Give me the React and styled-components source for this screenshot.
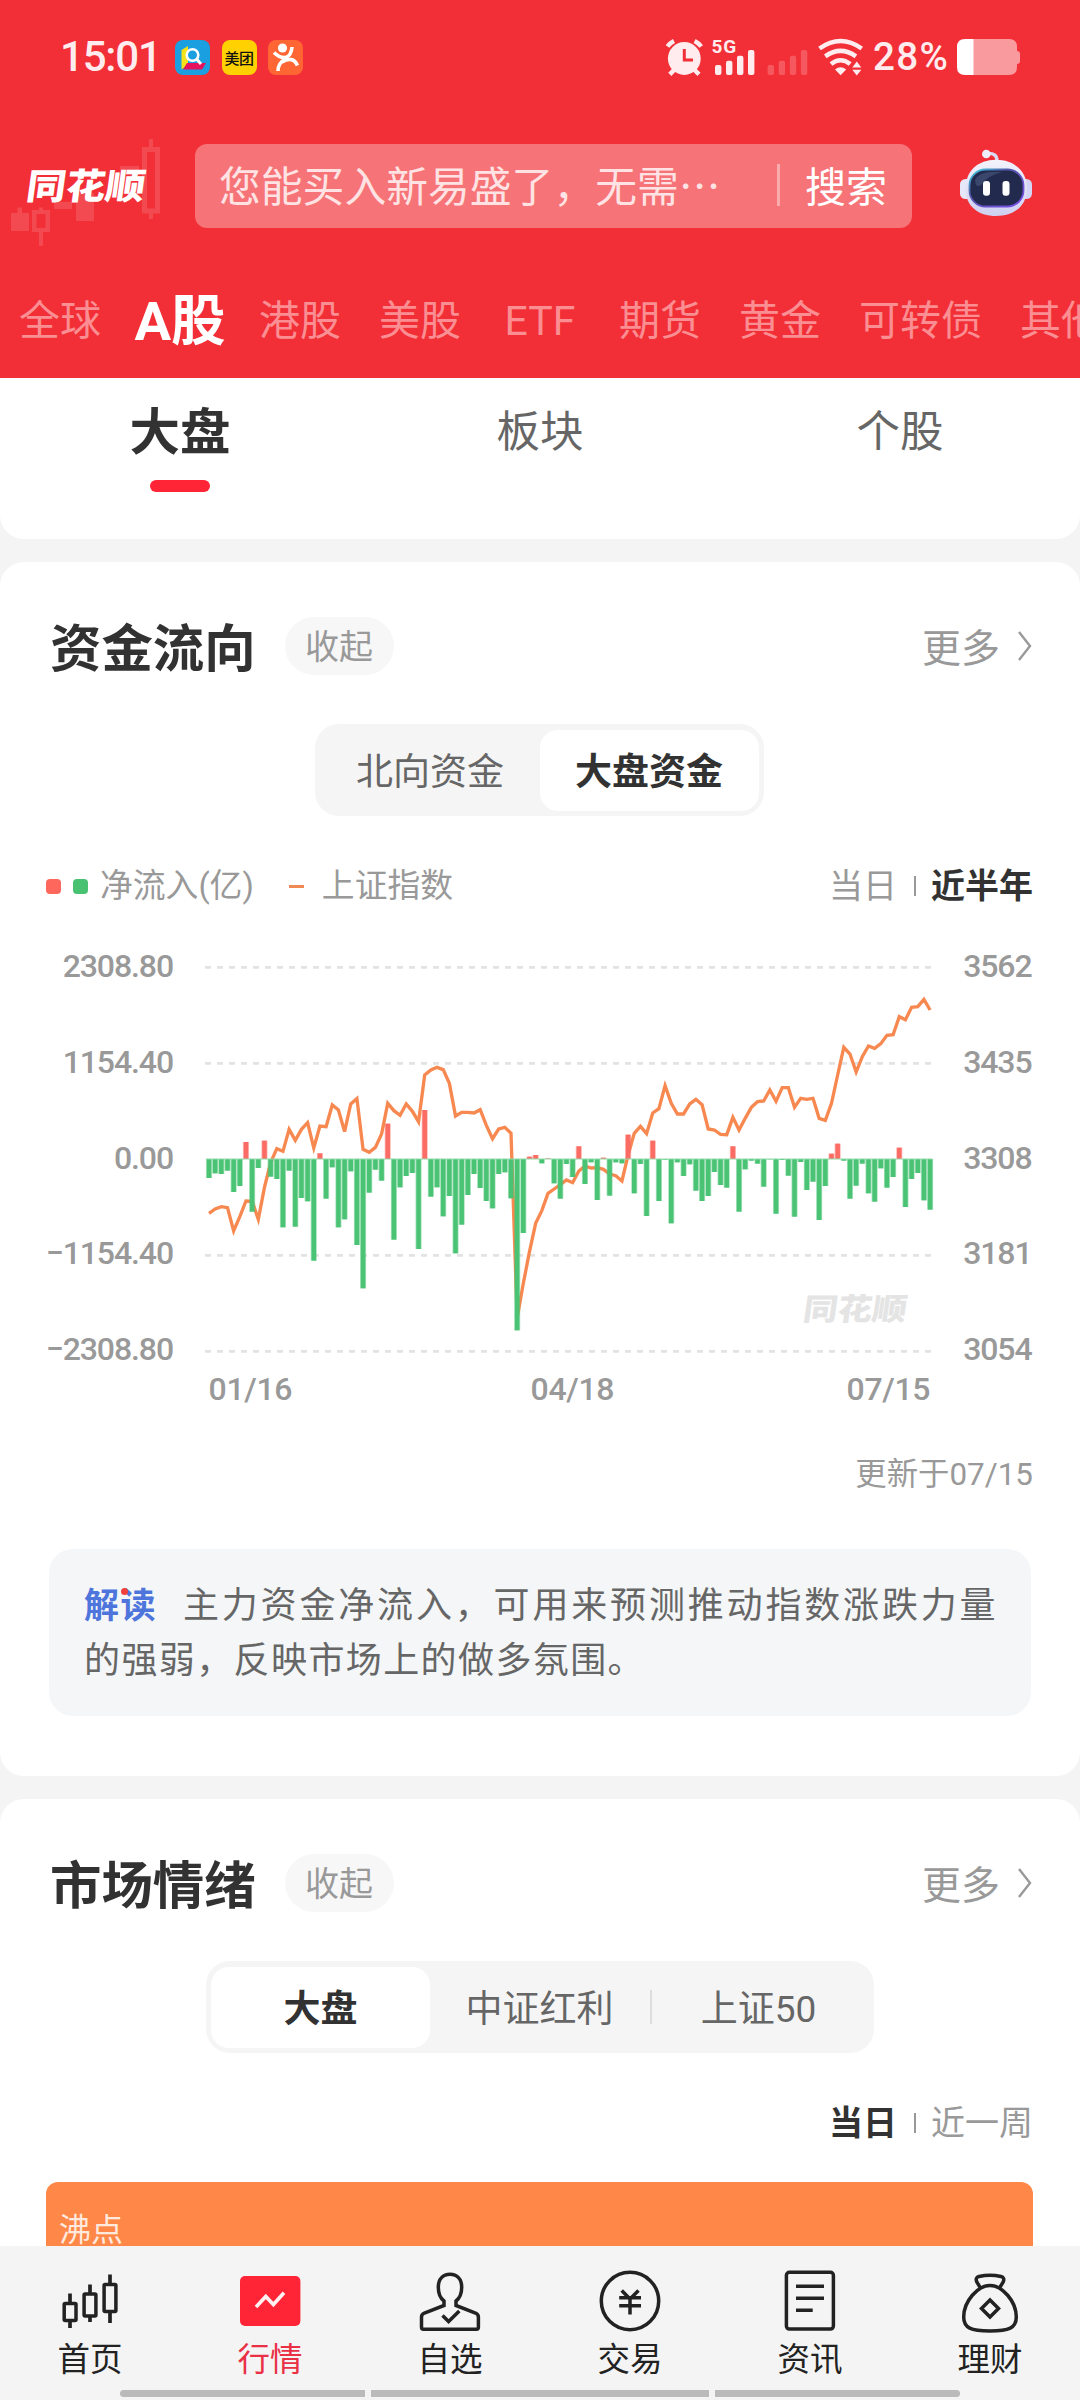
import * as React from "react"
import styled, { createGlobalStyle, css } from "styled-components"

const GlobalStyle = createGlobalStyle`
    * {
        box-sizing: border-box;
    }
    body {
        margin: 0;
        background: #f4f4f4;
        font-family: Roboto, "Noto Sans CJK SC", sans-serif;
        color: #323232;
    }
    svg {
        display: block;
        flex: none;
        overflow: visible;
    }
`

const Page = styled.div`
    width: 1080px;
    height: 2400px;
    display: flex;
    flex-direction: column;
    overflow: hidden;
`

/* ---------- header ---------- */

const Header = styled.header`
    position: relative;
    flex: none;
    height: 378px;
    background: #f22f37;
    overflow: hidden;
`

const HeaderArt = styled.svg`
    position: absolute;
    left: 0;
    top: 130px;
`

const StatusBar = styled.div`
    position: relative;
    display: flex;
    align-items: center;
    height: 114px;
    padding: 0 60px 0 60px;
    color: #ffecee;
`

const Clock = styled.span`
    width: 115px;
    font-size: 42px;
    font-weight: 500;
    line-height: 60px;
    letter-spacing: -1.2px;
`

const AppIcons = styled.div`
    display: flex;
    gap: 11.5px;
    flex: 1;
`

const AppIcon = styled.div`
    width: 35px;
    height: 35px;
    border-radius: 8px;
    overflow: hidden;
    display: flex;
    align-items: center;
    justify-content: center;
    background: ${({ $bg }) => $bg};
    color: #111;
    font-size: 15px;
    font-weight: 500;
    letter-spacing: -0.5px;
    white-space: nowrap;
`

const Percent = styled.span`
    margin: 0 8px 0 9px;
    width: 76px;
    font-size: 38.5px;
    font-weight: 500;
    line-height: 60px;
    letter-spacing: 1.4px;
`

const SearchRow = styled.div`
    position: relative;
    display: flex;
    align-items: center;
    height: 84px;
    margin-top: 30px;
`

const Brand = styled.div`
    width: 195px;
    padding-left: 22px;
`

const SearchBox = styled.div`
    display: flex;
    align-items: center;
    width: 717px;
    height: 84px;
    padding: 4px 25px 0 24px;
    border-radius: 12px;
    background: #f67377;
    font-size: 41.8px;
    line-height: 60px;
    color: #ffe3e4;
    white-space: nowrap;
`

const SearchHint = styled.span`
    flex: 1;
`

const SearchDivider = styled.i`
    width: 3px;
    height: 42px;
    margin: -6px 25px 0 0;
    background: #faabae;
`

const SearchButton = styled.span`
    font-size: 41px;
    color: #fff;
`

const Robot = styled.svg`
    margin-left: 44px;
`

const Markets = styled.nav`
    position: relative;
    display: flex;
    gap: 38px;
    height: 150px;
    padding: 13px 0 0 19px;
`

const Market = styled.span`
    flex: none;
    display: flex;
    justify-content: center;
    align-items: center;
    width: ${({ $wide }) => ($wide ? 123 : 82)}px;
    height: 160px;
    font-size: 41px;
    line-height: 60px;
    color: #fa8e92;
    white-space: nowrap;
    ${({ $active }) => $active && css`
        font-size: 54.5px;
        font-weight: 700;
        color: #fff;
    `}
`

/* ---------- cards ---------- */

const SubTabs = styled.nav`
    flex: none;
    display: grid;
    grid-template-columns: repeat(3, 1fr);
    height: 161px;
    margin-bottom: 23px;
    background: #fff;
    border-radius: 0 0 24px 24px;
`

const SubTab = styled.div`
    display: flex;
    flex-direction: column;
    align-items: center;
    font-size: ${({ $active }) => ($active ? 50.5 : 43.5)}px;
    font-weight: ${({ $active }) => ($active ? 700 : 400)};
    color: ${({ $active }) => ($active ? "#323232" : "#666")};
    line-height: 109px;

    &::after {
        content: "";
        display: ${({ $active }) => ($active ? "block" : "none")};
        width: 60px;
        height: 12px;
        margin-top: -7px;
        border-radius: 6px;
        background: #ff2436;
    }
`

const Card = styled.section`
    flex: none;
    height: ${({ $height }) => $height}px;
    margin-bottom: ${({ $last }) => ($last ? 0 : 23)}px;
    padding: 55px 47px 0 46px;
    background: #fff;
    border-radius: ${({ $last }) => ($last ? "24px 24px 0 0" : "24px")};
    overflow: hidden;
`

const CardHead = styled.div`
    display: flex;
    align-items: center;
    height: 58px;
    padding: 0 1px 0 4px;
`

const CardTitle = styled.h2`
    margin: 0;
    font-size: 51.4px;
    font-weight: 700;
    line-height: 58px;
    padding-top: 7px;
`

const Fold = styled.span`
    width: 109px;
    height: 58px;
    margin-left: 29px;
    border-radius: 29px;
    background: #f7f7f7;
    color: #999;
    font-size: 34px;
    line-height: 61px;
    text-align: center;
`

const More = styled.span`
    display: flex;
    align-items: center;
    gap: 18px;
    margin-left: auto;
    color: #999;
    font-size: 39px;
    line-height: 58px;
    padding-top: 5px;
`

const Segments = styled.div`
    display: flex;
    align-items: center;
    width: fit-content;
    height: 92px;
    margin: 49px auto 0;
    padding: 0 5.5px;
    border-radius: 24px;
    background: #f5f5f5;
`

const Segment = styled.div`
    width: 219px;
    height: 81px;
    border-radius: 18px;
    background: ${({ $active }) => ($active ? "#fff" : "transparent")};
    color: ${({ $active }) => ($active ? "#323232" : "#666")};
    font-size: 37px;
    font-weight: ${({ $active }) => ($active ? 700 : 400)};
    line-height: 86px;
    text-align: center;
`

const SegmentLine = styled.i`
    width: 2px;
    height: 34px;
    margin: 0 -3px 0 1px;
    background: #ddd;
`

const LegendRow = styled.div`
    display: flex;
    align-items: center;
    height: 50px;
    margin-top: 45px;
    color: #999;
    font-size: 32.8px;
    line-height: 50px;
`

const Dot = styled.i`
    width: 15px;
    height: 15px;
    margin-right: 12px;
    border-radius: 4px;
    background: ${({ $color }) => $color};
`

const Dash = styled.i`
    width: 15px;
    height: 3px;
    margin: 0 18px 0 35px;
    background: #f08a55;
`

const Range = styled.div`
    display: flex;
    align-items: center;
    margin-left: auto;
    font-size: 34px;

    b {
        color: #323232;
    }
    i {
        width: 2px;
        height: 20px;
        margin: 0 15px 0 17px;
        background: #999;
    }
`

const Chart = styled.svg`
    margin: 23px 0 0 -46px;
`

const Updated = styled.div`
    margin-top: 36px;
    color: #999;
    font-size: 31.4px;
    line-height: 50px;
    text-align: right;
`

const Explain = styled.div`
    width: 982px;
    height: 167px;
    margin: 49px 0 0 3px;
    padding: 30px 34px 0 35px;
    border-radius: 24px;
    background: #f4f6f8;
    color: #666;
    font-size: 36px;
    line-height: 55px;
    letter-spacing: 1.4px;
    text-align: justify;
`

const ExplainTag = styled.b`
    position: relative;
    margin-right: 26px;
    font-size: 35px;
    letter-spacing: 0;
    color: #4e75dc;

    &::after {
        content: "";
        position: absolute;
        left: 37px;
        top: 2px;
        width: 7px;
        height: 7px;
        border-radius: 50%;
        background: #f2403c;
    }
`

const Boiling = styled.div`
    height: 120px;
    margin-top: 34px;
    padding: 23px 13px;
    border-radius: 12px 12px 0 0;
    background: #ff8748;
    color: #ffe9dd;
    font-size: 32px;
    line-height: 50px;
`

/* ---------- bottom bar ---------- */

const BottomBar = styled.footer`
    flex: none;
    height: 154px;
    background: #f4f4f4;
`

const NavItems = styled.nav`
    display: grid;
    grid-template-columns: repeat(6, 180px);
    height: 144px;
    padding-top: 22px;
`

const NavItem = styled.div`
    display: flex;
    flex-direction: column;
    align-items: center;
    color: ${({ $active }) => ($active ? "#e93045" : "#222")};
    font-size: 32.5px;
    line-height: 52px;
`

const Gesture = styled.div`
    display: flex;
    gap: 6px;
    width: 840px;
    margin: 0 auto;

    i {
        flex: 245;
        height: 7px;
        background: #bababa;
    }
    i:nth-child(2) {
        flex: 338;
    }
    i:first-child {
        border-radius: 4px 0 0 4px;
    }
    i:last-child {
        border-radius: 0 4px 4px 0;
    }
`

/* height of each bar over (+) or under (-) the zero line, in chart units */
const FLOWS = [
    -57, -43, -45, -35, -99, -81, 51, -158, -27, 55, -53, -60, -205, -35, -203, -117, -127, -305, 17, -119,
    -25, -205, -181, -37, -258, -388, -101, -32, -65, 106, -242, -85, -51, -42, -270, 147, -113, -85, -172, -111,
    -283, -197, -108, -45, -87, -126, -148, -45, -40, -118, -514, -222, 7, 12, -13, 2, -73, -119, -15, -54,
    38, -75, -10, -123, 4, -110, -10, -13, 73, -103, -15, -171, 55, -126, -2, -193, -10, -51, -16, -95,
    -126, -111, -39, -78, -86, 38, -158, -31, -5, -14, -83, -1, -164, -3, -50, -173, -9, -93, -68, -183,
    -81, 16, 46, -5, -119, -80, -14, -103, -128, -28, -86, -54, 34, -144, -60, -42, -124, -152,
]

const INDEX = [
    820, 807, 800, 803, 873, 830, 783, 784, 838, 742, 668, 626, 634, 568, 601, 568, 548, 624, 558, 560,
    495, 510, 575, 492, 476, 628, 637, 622, 582, 490, 512, 526, 492, 514, 545, 405, 390, 382, 389, 430,
    528, 517, 517, 519, 509, 556, 596, 567, 562, 580, 1135, 1030, 935, 850, 812, 760, 747, 734, 720, 728,
    693, 678, 684, 683, 688, 702, 707, 723, 645, 580, 559, 581, 519, 506, 437, 490, 522, 522, 492, 478,
    494, 567, 570, 583, 584, 532, 570, 535, 502, 485, 483, 450, 484, 443, 443, 502, 475, 478, 475, 535,
    541, 490, 405, 322, 342, 396, 350, 318, 325, 311, 286, 284, 230, 239, 202, 200, 178, 210,
]

const STEP = 18.49
const ZERO = 657
const xOf = i => 57 + i * STEP

const FlowChart = () => (
    <Chart width="1080" height="480" viewBox="0 0 1080 480" fontFamily="Roboto, sans-serif" fontSize="32" fontWeight="500" fill="#999">
        <g transform="translate(190 6) scale(.33333)">
            <g stroke="#e3e3e3" strokeWidth="8" strokeDasharray="18 18">
                {[82, 370, 946, 1234].map(y => <path key={y} d={`M45 ${y}H2226`} />)}
            </g>
            <polyline points={INDEX.map((y, i) => `${xOf(i)},${y}`).join(" ")} fill="none" stroke="#f78850" strokeWidth="10" />
            {FLOWS.map((v, i) => (
                <g key={i} fill={v > 0 ? "#fb6c64" : "#4bc375"}>
                    <rect x={xOf(i) - 9.2} y={v > 0 ? ZERO - v : ZERO} width="18.4" height={Math.abs(v)} opacity=".45" />
                    <rect x={xOf(i) - 6.8} y={v > 0 ? ZERO - v : ZERO} width="13.6" height={Math.abs(v)} />
                </g>
            ))}
            <path d="M48 657H2226" stroke="#8fdcaa" strokeWidth="3" />
        </g>
        <text transform="translate(802 385.500) skewX(-8) scale(1 .88)" fontFamily="Noto Sans CJK SC" fontSize="34.5" fontWeight="900" fill="#e4e4e4">同花顺</text>
        <g textAnchor="end" letterSpacing="-1.1">
            {["2308.80", "1154.40", "0.00", "-1154.40", "-2308.80"].map((t, i) => (
                <text key={t} x="173" y={43.3 + i * 95.6}>{t.replace("-", "−")}</text>
            ))}
            {["3562", "3435", "3308", "3181", "3054"].map((t, i) => (
                <text key={t} x="1031.5" y={43.3 + i * 95.6}>{t}</text>
            ))}
        </g>
        <g letterSpacing="-.3">
            <text x="208.500" y="466">01/16</text>
            <text x="530.500" y="466">04/18</text>
            <text x="846.500" y="466">07/15</text>
        </g>
    </Chart>
)

const CardTop = ({ title }) => (
    <CardHead>
        <CardTitle>{title}</CardTitle>
        <Fold>收起</Fold>
        <More>
            更多
            <svg width="14" height="30" viewBox="0 3 14 30" fill="none" stroke="#999" strokeWidth="2.4">
                <path d="M1 1L12 15L1 29" />
            </svg>
        </More>
    </CardHead>
)

const StatusIcons = () => (
    <svg width="200" height="42" viewBox="664 36 200 42" fill="#ffecee">
        <circle cx="684.3" cy="58.5" r="16.4" />
        <g stroke="#ffecee" strokeWidth="4.5" fill="none">
            <path d="M667.5 46.500Q670 43 674 41M694.600 41Q698.500 43 701.200 46.500M676 68L669.800 74.300M692.600 68L699 74.300" />
        </g>
        <path d="M684.300 49V60H693" fill="none" stroke="#f22f37" strokeWidth="3" />
        <text x="711.5" y="53" fontSize="19" fontWeight="700" letterSpacing=".8">5G</text>
        {[65, 60.7, 55.7, 50].map((y, i) => (
            <g key={y}>
                <rect x={715 + i * 11} y={y} width="6.4" height={75 - y} rx="2" />
                <rect x={767.6 + i * 11.1} y={y} width="6.4" height={75 - y} rx="2" opacity=".22" />
            </g>
        ))}
        <g fill="none" stroke="#ffecee" strokeWidth="4.6">
            <path d="M819.500 48.500Q840.600 33.500 861.700 48.500" />
            <path d="M825.300 56.300Q840.600 45.500 855.900 56.300" />
            <path d="M831 64Q840.600 56.500 850.200 64" />
        </g>
        <path d="M835 69.500Q840.600 65 846.200 69.500L840.600 75.200ZM852.300 67.600L856.800 61.500L861.300 67.600ZM852.300 69.700L856.800 75.500L861.300 69.700Z" />
    </svg>
)

const Battery = () => (
    <svg width="63" height="36" viewBox="0 0 63 36">
        <path d="M16 0H52Q60 0 60 8V12Q63 12 63 15V22Q63 25 60 25V28Q60 36 52 36H16Z" fill="#f99a9e" />
        <path d="M16.500 0H8Q0 0 0 8V28Q0 36 8 36H16.500Z" fill="#fff" />
    </svg>
)

const RobotHead = () => (
    <Robot width="80" height="84" viewBox="0 0 80 84">
        <defs>
            <linearGradient id="shell" x1="0" y1="0" x2="0" y2="1">
                <stop offset="0" stopColor="#f3f3fd" />
                <stop offset="1" stopColor="#cfd0f0" />
            </linearGradient>
            <linearGradient id="visor" x1="0" y1="0" x2="1" y2="1">
                <stop offset="0" stopColor="#3ed8e0" />
                <stop offset=".35" stopColor="#5456a8" />
                <stop offset="1" stopColor="#7d4ff0" />
            </linearGradient>
        </defs>
        <path d="M31 9.500Q41 8.500 41 17" fill="none" stroke="#d9d9f2" strokeWidth="3.4" />
        <circle cx="30.300" cy="10" r="4.300" fill="#efeffb" />
        <rect x="4" y="35" width="12" height="20" rx="5.500" fill="#e7e7fa" />
        <rect x="64" y="35" width="12" height="20" rx="5.500" fill="#d5d6f5" />
        <path d="M40 15.700C58 15.700 71 27 71 44.500C71 62 58 72 40 72S9.500 62 9.500 44.500C9.500 27 22 15.700 40 15.700Z" fill="url(#shell)" />
        <rect x="13.500" y="25.500" width="54" height="37" rx="16" fill="#222b4e" stroke="url(#visor)" strokeWidth="1.800" />
        <path d="M19 36Q23 28.500 34 28H46Q31 32 26 40Q20 46 19 36Z" fill="#4c5880" opacity=".6" />
        <rect x="27" y="37" width="7" height="14.700" rx="3" fill="#fff" />
        <rect x="46.500" y="37" width="7" height="14.700" rx="3" fill="#fff" />
    </Robot>
)

const icons = {
    home: (
        <g>
            <path d="M16 25.500V35M16 53V60M36 16.500V26M36 48V54M56 6.500V16M56 44V55" strokeWidth="3.700" />
            <rect x="10.200" y="35.500" width="11.800" height="17" rx="1" />
            <rect x="30.100" y="26" width="11.800" height="22" rx="1" />
            <rect x="50.100" y="16.500" width="11.800" height="27" rx="1" />
        </g>
    ),
    quotes: (
        <g stroke="#fff0f2" strokeWidth="3.600">
            <rect x="6" y="8" width="60.400" height="50" rx="5" fill="#ff2436" stroke="none" />
            <path d="M22 39L31.800 28.500L39.400 36.500L50 24.700" />
        </g>
    ),
    watch: (
        <g>
            <path d="M30 33C26 30 24.300 25 24.300 19C24.300 11 29 6.200 36 6.200S47.700 11 47.700 19C47.700 25 46 30 42 33V37.500L61.500 45Q64.400 46.300 64.400 49V59Q64.400 61.200 62.500 61.200H9.400Q7.500 61.200 7.500 59V49Q7.500 46.300 10.400 45L30 37.500Z" />
            <path d="M28.500 47.500L34.600 53.500L45.300 43" />
        </g>
    ),
    trade: (
        <g>
            <circle cx="36" cy="33" r="28.700" />
            <path d="M27.700 22.500L36 31L44.500 22.500M36 30V46.500M25.200 29.700H47M25.200 37.700H47" />
        </g>
    ),
    news: (
        <g>
            <rect x="12.400" y="4.300" width="47" height="56.800" rx="3" />
            <path d="M22 18.300H50M22 30.300H50M22 42.200H38.700" />
        </g>
    ),
    wealth: (
        <g>
            <path d="M36 17.500C48 17.500 62.300 33 62.300 49C62.300 60 55 63 36 63S9.700 60 9.700 49C9.700 33 24 17.500 36 17.500Z" />
            <path d="M26.500 20L22.800 14Q21 9.500 25 8.500Q36 6 47 8.500Q51 9.500 49.200 14L45.500 20" />
            <path d="M36 32L44.500 40.500L36 49L27.500 40.500Z" />
        </g>
    ),
}

const markets = ["全球", "A股", "港股", "美股", "ETF", "期货", "黄金", "可转债", "其他"]

const navs = [
    ["home", "首页"],
    ["quotes", "行情"],
    ["watch", "自选"],
    ["trade", "交易"],
    ["news", "资讯"],
    ["wealth", "理财"],
]

const App = () => (
    <Page>
        <GlobalStyle />
        <Header>
            <HeaderArt width="170" height="125" viewBox="0 130 170 125" fill="#fff" opacity=".13">
                <path d="M11 213H17.500V207.500H22V213H29V231H11ZM76 193H94V221H76ZM54 202H72V209H54ZM120 166H139V170H120ZM39 232H43V246H39Z" />
                <path d="M32 210H39V207.500H43V210H50V232H32ZM36.500 214V228H45.500V214ZM142 147H149V139H153V147H160V213.500H153V219H149V213.500H142ZM147 152V208.500H155V152Z" fillRule="evenodd" />
            </HeaderArt>
            <StatusBar>
                <Clock>15:01</Clock>
                <AppIcons>
                    <AppIcon $bg="#1a9fe0">
                        <svg width="35" height="35" viewBox="0 0 35 35">
                            <path d="M6.500 10L13 6V25L6.500 29.500Z" fill="#f5e21a" />
                            <path d="M12 23H31L27 29.500H8Z" fill="#e5125d" />
                            <circle cx="17.500" cy="15" r="5.800" fill="#1a9fe0" stroke="#fff" strokeWidth="2.600" />
                            <path d="M21.500 19L26 24" stroke="#fff" strokeWidth="3" />
                        </svg>
                    </AppIcon>
                    <AppIcon $bg="#ffd100">美团</AppIcon>
                    <AppIcon $bg="#ff6633">
                        <svg width="35" height="35" viewBox="0 0 35 35" fill="none" stroke="#fff" strokeWidth="3.600">
                            <circle cx="14.500" cy="8" r="4.600" fill="#fff" stroke="none" />
                            <path d="M6 12.500Q12 18.500 18 17.500Q23.500 15 24 7M10 31Q10 23 18 18.500M14 22Q25 15.500 29.500 25.500" />
                        </svg>
                    </AppIcon>
                </AppIcons>
                <StatusIcons />
                <Percent>28%</Percent>
                <Battery />
            </StatusBar>
            <SearchRow>
                <Brand>
                    <svg width="130" height="44" viewBox="0 0 130 44">
                        <text transform="translate(3 34.500) skewX(-8) scale(1 .9)" fontFamily="Noto Sans CJK SC" fontSize="39.500" fontWeight="900" fill="#fff">同花顺</text>
                    </svg>
                </Brand>
                <SearchBox>
                    <SearchHint>您能买入新易盛了，无需⋯</SearchHint>
                    <SearchDivider />
                    <SearchButton>搜索</SearchButton>
                </SearchBox>
                <RobotHead />
            </SearchRow>
            <Markets>
                {markets.map(m => (
                    <Market key={m} $active={m === "A股"} $wide={m === "可转债"}>{m}</Market>
                ))}
            </Markets>
        </Header>

        <SubTabs>
            <SubTab $active>大盘</SubTab>
            <SubTab>板块</SubTab>
            <SubTab>个股</SubTab>
        </SubTabs>

        <Card $height={1214}>
            <CardTop title="资金流向" />
            <Segments>
                <Segment>北向资金</Segment>
                <Segment $active>大盘资金</Segment>
            </Segments>
            <LegendRow>
                <Dot $color="#fd675c" />
                <Dot $color="#48c170" />
                <span>净流入(亿)</span>
                <Dash />
                <span>上证指数</span>
                <Range>
                    <span>当日</span>
                    <i />
                    <b>近半年</b>
                </Range>
            </LegendRow>
            <FlowChart />
            <Updated>更新于07/15</Updated>
            <Explain>
                <ExplainTag>解读</ExplainTag>
                主力资金净流入，可用来预测推动指数涨跌力量的强弱，反映市场上的做多氛围。
            </Explain>
        </Card>

        <Card $height={447} $last>
            <CardTop title="市场情绪" />
            <Segments>
                <Segment $active>大盘</Segment>
                <Segment>中证红利</Segment>
                <SegmentLine />
                <Segment>上证50</Segment>
            </Segments>
            <LegendRow>
                <Range>
                    <b>当日</b>
                    <i />
                    <span>近一周</span>
                </Range>
            </LegendRow>
            <Boiling>沸点</Boiling>
        </Card>

        <BottomBar>
            <NavItems>
                {navs.map(([icon, label]) => (
                    <NavItem key={icon} $active={icon === "quotes"}>
                        <svg width="72" height="66" viewBox="0 0 72 66" fill="none" stroke="#222" strokeWidth="3.500">
                            {icons[icon]}
                        </svg>
                        {label}
                    </NavItem>
                ))}
            </NavItems>
            <Gesture>
                <i />
                <i />
                <i />
            </Gesture>
        </BottomBar>
    </Page>
)

export default App
